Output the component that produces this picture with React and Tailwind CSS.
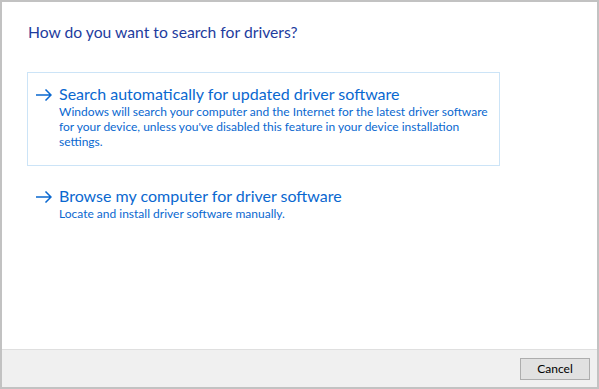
const Arrow = () => (
  <svg width="16" height="12" viewBox="0 0 16 12" className="shrink-0 block">
    <path d="M0 6h15M9.5 0.5L15 6l-5.5 5.5" fill="none" stroke="#0a68d0" strokeWidth="1.5" />
  </svg>
);

const Option = ({ title, desc, boxed }) => (
  <div
    className={
      "flex items-start pl-[8px] pr-[6px] pt-[10px] border " +
      (boxed ? "border-[#cce4f7] pb-[16px]" : "border-transparent pb-[10px]")
    }
  >
    <div className="pt-[6px] pr-[7px]">
      <Arrow />
    </div>
    <div className="flex-1 text-[#0a68d0]">
      <div className="text-[16px] leading-[21px]">{title}</div>
      <div className="text-[12px] leading-[15px]">{desc}</div>
    </div>
  </div>
);

export default function App() {
  return (
    <div
      className="w-[599px] h-[389px] border-2 border-[#c2c2c2] flex flex-col bg-white"
      style={{ fontFamily: 'Lato, "Noto Sans", sans-serif' }}
    >
      <div className="flex-1 pl-[25px] pt-[20px]">
        <h1 className="text-[15.7px] leading-[20px] text-[#1e3c9e] pl-[1px]">
          How do you want to search for drivers?
        </h1>
        <div className="mt-[30px] w-[473px] flex flex-col gap-[8px]">
          <Option
            boxed
            title="Search automatically for updated driver software"
            desc="Windows will search your computer and the Internet for the latest driver software for your device, unless you've disabled this feature in your device installation settings."
          />
          <Option
            title="Browse my computer for driver software"
            desc="Locate and install driver software manually."
          />
        </div>
      </div>
      <div className="h-[38px] border-t border-[#dfdfdf] bg-[#f0f0f0] flex items-start justify-end pr-[7px] pt-[8px]">
        <button className="w-[70px] h-[22px] border border-[#adadad] bg-[#e1e1e1] text-[12px] text-black leading-none">
          Cancel
        </button>
      </div>
    </div>
  );
}
